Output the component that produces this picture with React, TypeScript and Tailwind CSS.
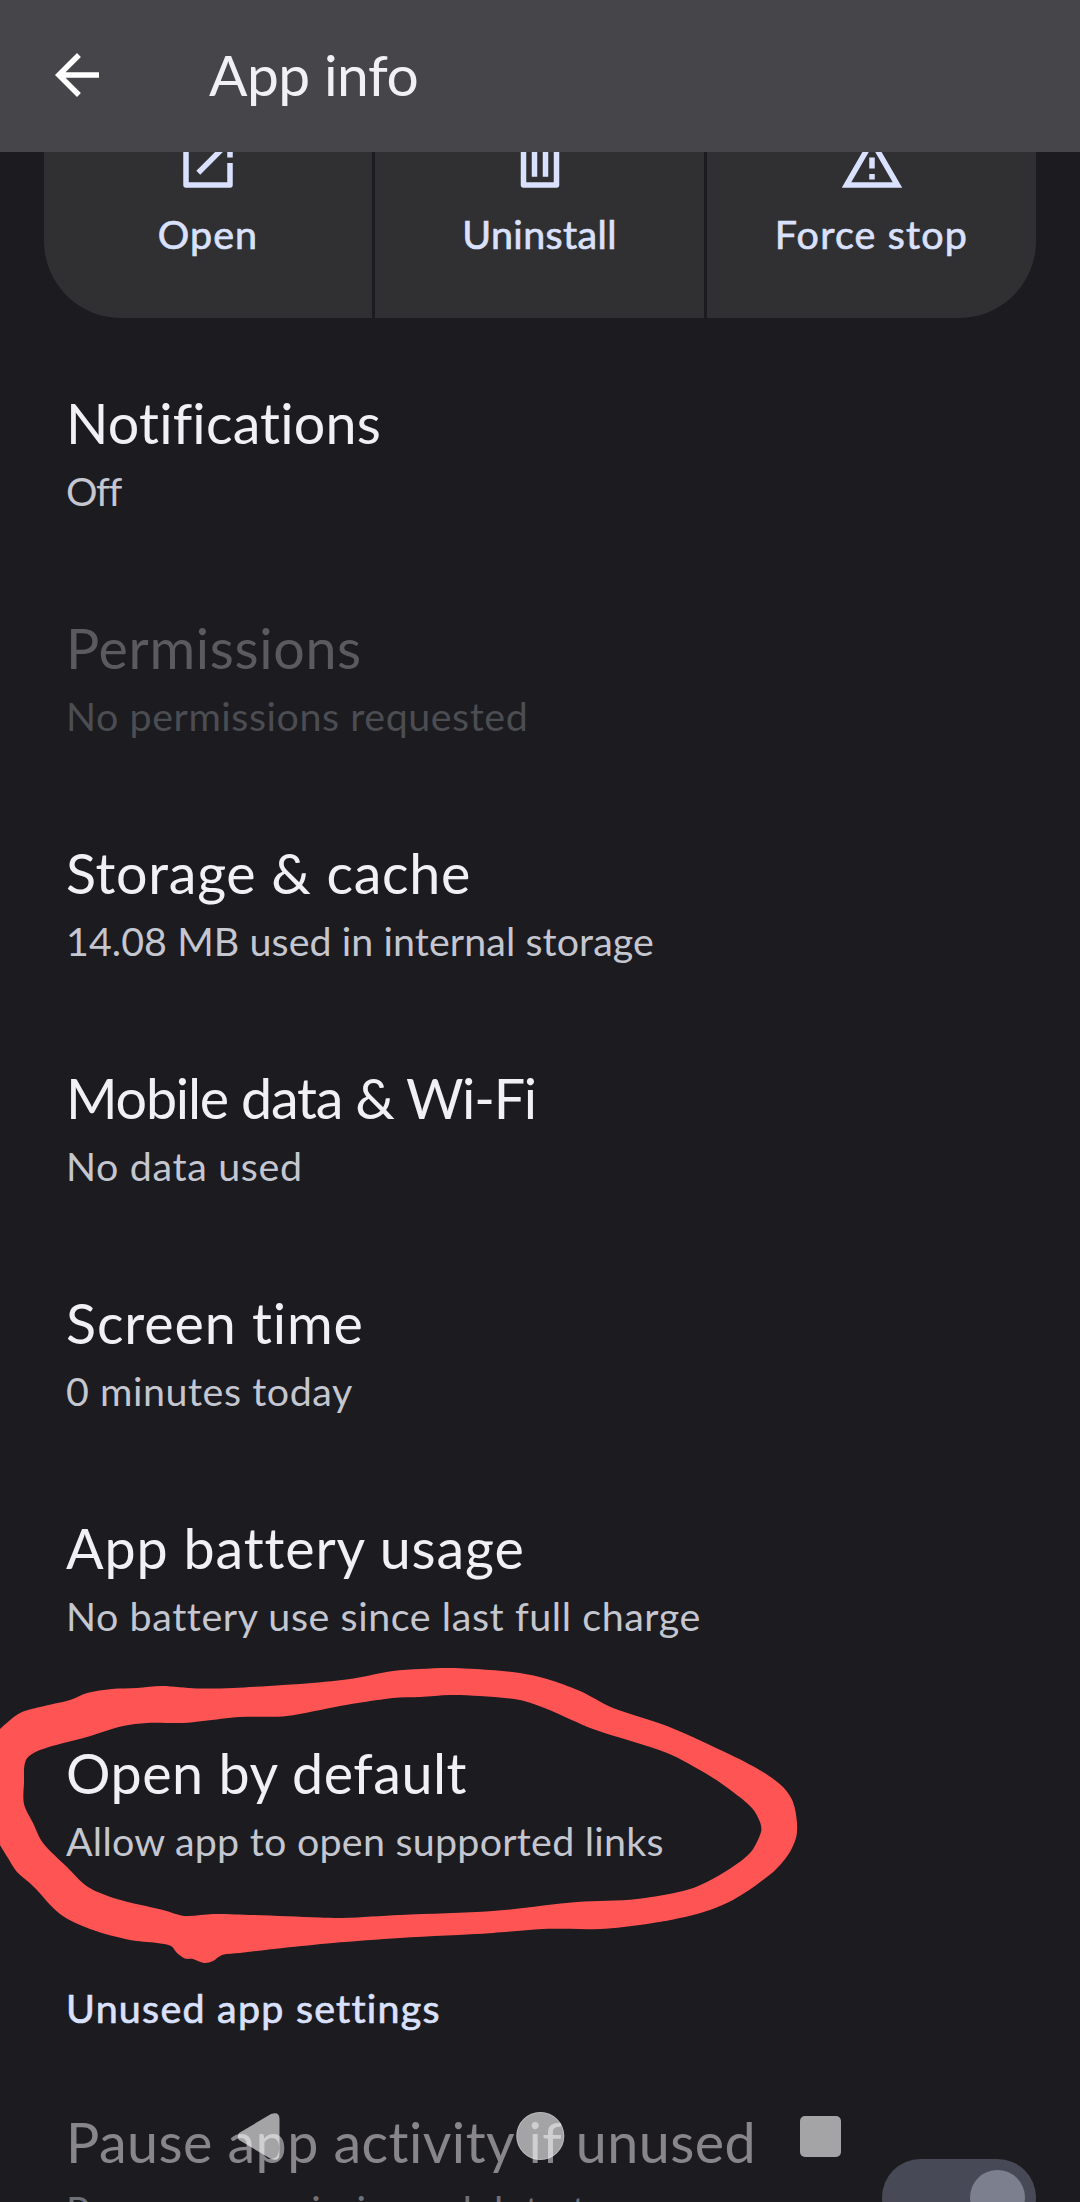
import React from 'react';

type Point = [number, number];

type Setting = {
  title: string;
  summary: string;
  titleClass: string;
  summaryClass: string;
  disabled?: boolean;
};

const settings: Setting[] = [
  { title: 'Notifications', summary: 'Off', titleClass: 'tracking-[0.2px]', summaryClass: 'tracking-[-1.4px]' },
  {
    title: 'Permissions',
    summary: 'No permissions requested',
    titleClass: 'tracking-[0.65px]',
    summaryClass: 'tracking-[0.55px]',
    disabled: true,
  },
  {
    title: 'Storage & cache',
    summary: '14.08 MB used in internal storage',
    titleClass: 'tracking-[0.7px]',
    summaryClass: 'tracking-[0.07px]',
  },
  { title: 'Mobile data & Wi-Fi', summary: 'No data used', titleClass: 'tracking-[-1.2px]', summaryClass: 'tracking-[0.65px]' },
  { title: 'Screen time', summary: '0 minutes today', titleClass: 'tracking-[0.9px]', summaryClass: 'tracking-[0.55px]' },
  {
    title: 'App battery usage',
    summary: 'No battery use since last full charge',
    titleClass: 'tracking-[0.87px]',
    summaryClass: 'tracking-[0.58px]',
  },
  {
    title: 'Open by default',
    summary: 'Allow app to open supported links',
    titleClass: 'tracking-[0.55px]',
    summaryClass: 'tracking-[0.25px]',
  },
];

const outerEdge: Point[] = [
  [-14, 1744], [0, 1729], [20, 1713], [40, 1707], [70, 1700], [87, 1693], [112, 1689], [137, 1688], [162, 1686],
  [197, 1688.5], [233, 1688], [283, 1685], [300, 1684], [350, 1679], [393, 1671], [420, 1669], [450, 1668],
  [490, 1670], [520, 1673], [547, 1679], [580, 1691], [613, 1708], [667, 1726], [733, 1756], [763, 1772],
  [783, 1787], [793, 1802], [797, 1823], [796, 1838], [788, 1855], [772, 1873], [733, 1900], [697, 1914],
  [647, 1924], [600, 1929], [543, 1929], [493, 1933], [400, 1938], [333, 1943], [283, 1948], [240, 1953],
  [222, 1955], [213, 1961], [204, 1963], [193, 1959], [185, 1958.5], [177, 1953], [171, 1946], [157, 1943],
  [130, 1940], [90, 1929], [60, 1914], [33, 1886], [17, 1872], [8, 1858], [0, 1845], [-14, 1820],
];

const innerEdge: Point[] = [
  [26, 1760], [40, 1750], [87, 1737], [123, 1726], [147, 1723], [183, 1723], [203, 1721], [240, 1717],
  [287, 1716], [340, 1706], [393, 1698], [420, 1697], [450, 1695], [480, 1696], [520, 1700], [547, 1709],
  [593, 1729], [667, 1753], [710, 1776], [733, 1792], [752, 1808], [760, 1822], [761, 1832], [750, 1853],
  [723, 1873], [690, 1889], [637, 1899], [577, 1902], [493, 1911], [400, 1915], [343, 1918], [320, 1917.5],
  [253, 1915], [213, 1914], [185, 1916], [163, 1910], [117, 1899], [88, 1887], [67, 1867], [43, 1843],
  [33, 1823], [24, 1804], [24, 1783],
];

/** Closed Catmull-Rom curve through the points, with a softened tension. */
function smooth(points: Point[]): string {
  const n = points.length;
  let d = `M${points[0][0]} ${points[0][1]}`;
  for (let i = 0; i < n; i++) {
    const p0 = points[(i - 1 + n) % n];
    const p1 = points[i];
    const p2 = points[(i + 1) % n];
    const p3 = points[(i + 2) % n];
    const len = Math.hypot(p2[0] - p1[0], p2[1] - p1[1]);
    const handle = (a: Point, b: Point): Point => {
      const l = Math.hypot(b[0] - a[0], b[1] - a[1]) || 1;
      return [((b[0] - a[0]) / l) * len * 0.3, ((b[1] - a[1]) / l) * len * 0.3];
    };
    const h1 = handle(p0, p2);
    const h2 = handle(p1, p3);
    d += `C${p1[0] + h1[0]} ${p1[1] + h1[1]} ${p2[0] - h2[0]} ${p2[1] - h2[1]} ${p2[0]} ${p2[1]}`;
  }
  return d + 'Z';
}

function Icon({ d }: { d: string }) {
  return (
    <svg viewBox="0 0 24 24" className="size-[66px] shrink-0 fill-current">
      <path fillRule="evenodd" d={d} />
    </svg>
  );
}

const openIcon =
  'M20 21H4a1 1 0 0 1-1-1V4a1 1 0 0 1 1-1h8v2H5v14h14v-7h2v8a1 1 0 0 1-1 1zM14 3v2h3.59l-9.83 9.83 1.41 1.41L19 6.41V10h2V3z';
const trashIcon = 'M6 21a1 1 0 0 1-1-1V6H4V4h5V3h6v1h5v2h-1v14a1 1 0 0 1-1 1zM7 6v13h10V6zM9 8h2v9H9zM13 8h2v9h-2z';
const warningIcon = 'M12 5.99 19.53 19H4.47zM12 2 1 21h22zM13 16h-2v2h2zM13 10h-2v4h2z';

const actions = [
  { label: 'Open', icon: openIcon, tracking: 'tracking-[1.1px]' },
  { label: 'Uninstall', icon: trashIcon, tracking: 'tracking-[0.4px]' },
  { label: 'Force stop', icon: warningIcon, tracking: 'tracking-[1.2px]' },
];

function Row({ title, summary, titleClass, summaryClass, disabled }: Setting) {
  return (
    <li className="flex h-[225px] flex-col justify-center gap-[11px] pl-[66px]">
      <div className={`h-[66px] text-[55.6px] leading-[66px] ${titleClass} ${disabled ? 'text-[#5b5a5e]' : 'text-[#f1f0f4]'}`}>
        {title}
      </div>
      <div className={`h-12 text-[39.4px] leading-[48px] ${summaryClass} ${disabled ? 'text-[#4b4d52]' : 'text-[#c4c6d0]'}`}>
        {summary}
      </div>
    </li>
  );
}

export default function App() {
  return (
    <div className="relative h-[2202px] w-[1080px] overflow-hidden whitespace-nowrap bg-[#1c1b1f] font-['Lato',sans-serif]">
      <header className="flex h-[152px] items-start bg-[#464549] pl-[44px] pt-[42px]">
        <svg viewBox="0 0 24 24" className="size-[66px] fill-white">
          <path d="M20 11H7.83l5.59-5.59L12 4l-8 8 8 8 1.41-1.41L7.83 13H20z" />
        </svg>
        <h1 className="ml-[99px] mt-px text-[56.9px] leading-[62px] tracking-[-0.46px] text-[#f1f0f4]">App info</h1>
      </header>

      <section className="mx-[44px] grid h-[166px] grid-cols-[328px_329px_329px] gap-[3px] overflow-hidden rounded-b-[77px]">
        {actions.map((a) => (
          <div key={a.label} className="flex flex-col items-center bg-[#303032] text-[#dae1ff]">
            <div className="-mt-[22px] h-[66px] [clip-path:inset(22px_0_0_0)]">
              <Icon d={a.icon} />
            </div>
            <div className={`mt-[14px] text-[39.4px] leading-[48px] [-webkit-text-stroke:0.7px_#dae1ff] ${a.tracking}`}>{a.label}</div>
          </div>
        ))}
      </section>

      <ul className="mt-[22px]">
        {settings.map((s) => (
          <Row key={s.title} {...s} />
        ))}
      </ul>

      <h2 className="mt-[69px] pl-[66px] text-[39.4px] leading-[48px] tracking-[1.25px] text-[#dae1ff] [-webkit-text-stroke:0.7px_#dae1ff]">
        Unused app settings
      </h2>

      <div className="mt-[77px] flex items-start justify-between pl-[66px] pr-[44px]">
        <div>
          <div className="text-[55.6px] leading-[66px] tracking-[0.45px] text-[#88868a]">Pause app activity if unused</div>
          <div className="mt-[11px] text-[39.4px] leading-[48px] tracking-[0.59px] text-[#6f7179]">
            Remove permissions, delete temporary
          </div>
        </div>
        <div className="mt-[50px] flex h-[77px] w-[154px] justify-end rounded-full bg-[#474a56] p-[11px]">
          <div className="size-[55px] rounded-full bg-[#7b7f8e]" />
        </div>
      </div>

      <svg viewBox="0 0 1080 2202" className="pointer-events-none absolute inset-0 h-[2202px] w-[1080px]">
        <path d={smooth(outerEdge) + smooth(innerEdge)} fill="#ff5454" fillRule="evenodd" />
        <g fill="#fff" fillOpacity="0.6">
          <path d="M239 2133 271 2114Q279.500 2111 279.500 2119V2154Q279.500 2162 271 2159L239 2140Q236.500 2136.500 239 2133Z" />
          <circle cx="540.3" cy="2136" r="24" />
          <rect x="800" y="2116" width="41" height="41" rx="5" />
        </g>
        <circle cx="540.3" cy="2136" r="23.500" fill="none" stroke="#fff" strokeOpacity="0.25" />
      </svg>
    </div>
  );
}
